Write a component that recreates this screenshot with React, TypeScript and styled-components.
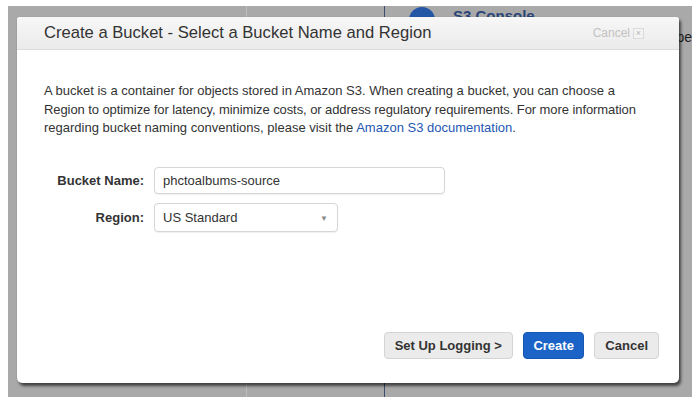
import React from "react";
import styled, { createGlobalStyle } from "styled-components";

const Global = createGlobalStyle`
  html, body { margin: 0; padding: 0; background: #ffffff; }
  body { font-family: "Liberation Sans", Arial, Helvetica, sans-serif; }
  * { box-sizing: border-box; }
`;

const Screen = styled.div`
  width: 698px;
  height: 404px;
  padding: 6px 6px 7px 8px;
  background: #ffffff;
`;

const Backdrop = styled.div`
  position: relative;
  width: 684px;
  height: 391px;
  background: #a9a9a9;
  overflow: hidden;
`;

const PageBehind = styled.div`
  display: flex;
  height: 100%;
`;

const Pane = styled.div<{ $w?: number; $line?: string }>`
  flex: ${(p) => (p.$w ? `0 0 ${p.$w}px` : "1 1 auto")};
  border-right: ${(p) => (p.$line ? `1px solid ${p.$line}` : "none")};
  display: flex;
  flex-direction: column;
`;

const ConsoleHead = styled.div`
  display: flex;
  align-items: flex-start;
  gap: 8px;
  padding: 1px 0 0 24px;
`;

const ConsoleDot = styled.div`
  width: 26px;
  height: 26px;
  border-radius: 50%;
  background: #2456a6;
`;

const ConsoleTitle = styled.div`
  font-size: 15px;
  font-weight: bold;
  color: #2a4577;
  padding-left: 10px;
  line-height: 18px;
`;

const PeekText = styled.div`
  align-self: flex-end;
  margin-top: -4px;
  margin-right: -7px;
  font-size: 14px;
  color: #1e1e1e;
`;

const Dialog = styled.div`
  position: absolute;
  left: 9px;
  top: 11px;
  width: 662px;
  height: 366px;
  background: #ffffff;
  border-radius: 3px 3px 5px 5px;
  box-shadow: 2px 3px 3px rgba(0, 0, 0, 0.6), 0 0 1px rgba(0, 0, 0, 0.3);
  display: flex;
  flex-direction: column;
`;

const Header = styled.div`
  height: 33px;
  display: flex;
  align-items: center;
  justify-content: space-between;
  padding: 0 35px 0 27px;
  background: linear-gradient(#f7f7f7, #ebebeb);
  border-bottom: 1px solid #dcdcdc;
  border-radius: 3px 3px 0 0;
`;

const Title = styled.div`
  font-size: 16.6px;
  color: #333333;
`;

const CloseLink = styled.div`
  display: flex;
  align-items: center;
  gap: 3px;
  font-size: 12px;
  color: #c2c2c2;
`;

const CloseBox = styled.span`
  width: 11px;
  height: 11px;
  border: 1px solid #dadada;
  background: #f3f3f3;
  color: #b8b8b8;
  font-size: 9px;
  line-height: 9px;
  display: inline-flex;
  align-items: center;
  justify-content: center;
`;

const Body = styled.div`
  flex: 1;
  display: flex;
  flex-direction: column;
  padding: 32px 20px 24px 27px;
`;

const Intro = styled.p`
  margin: 0;
  font-size: 13px;
  line-height: 18.5px;
  color: #333333;
`;

const IntroLine = styled.span<{ $track?: number }>`
  display: block;
  white-space: nowrap;
  letter-spacing: ${(p) => p.$track ?? 0}px;
`;

const Link = styled.a`
  color: #2457b3;
  text-decoration: none;
`;

const Form = styled.div`
  display: grid;
  grid-template-columns: 100px auto;
  column-gap: 10px;
  row-gap: 9px;
  margin-top: 29px;
  align-items: center;
  justify-items: start;
`;

const Label = styled.label`
  justify-self: end;
  font-size: 13px;
  font-weight: bold;
  color: #333333;
`;

const Field = styled.div<{ $w: number; $h: number }>`
  width: ${(p) => p.$w}px;
  height: ${(p) => p.$h}px;
  border: 1px solid #d6d6d6;
  border-radius: 4px;
  box-shadow: 0 1px 1px rgba(0, 0, 0, 0.06);
  background: #ffffff;
  display: flex;
  align-items: center;
  justify-content: space-between;
  padding: 0 9px 0 8px;
  font-size: 13px;
  color: #333333;
`;

const Caret = styled.span`
  font-size: 8px;
  color: #8a8a8a;
  margin-top: 3px;
`;

const Footer = styled.div`
  margin-top: auto;
  display: flex;
  justify-content: flex-end;
  gap: 10px;
`;

const Button = styled.button<{ $primary?: boolean }>`
  height: 27px;
  padding: 0 ${(p) => (p.$primary ? 9.5 : 10)}px;
  border-radius: 4px;
  font-family: inherit;
  font-size: 13px;
  font-weight: bold;
  border: 1px solid ${(p) => (p.$primary ? "#1657b4" : "#d4d4d4")};
  background: ${(p) => (p.$primary ? "#1b63c6" : "#ebebeb")};
  color: ${(p) => (p.$primary ? "#ffffff" : "#333333")};
`;

export default function App() {
  return (
    <>
      <Global />
      <Screen>
        <Backdrop>
          <PageBehind>
            <Pane $w={239} $line="#bdbdbd" />
            <Pane $w={138} $line="#3c4d70" />
            <Pane>
              <ConsoleHead>
                <ConsoleDot />
                <ConsoleTitle>S3 Console</ConsoleTitle>
              </ConsoleHead>
              <PeekText>Spec</PeekText>
            </Pane>
          </PageBehind>
          <Dialog>
            <Header>
              <Title>Create a Bucket - Select a Bucket Name and Region</Title>
              <CloseLink>
                Cancel <CloseBox>×</CloseBox>
              </CloseLink>
            </Header>
            <Body>
              <Intro>
                <IntroLine>
                  A bucket is a container for objects stored in Amazon S3. When creating a bucket, you can choose a
                </IntroLine>
                <IntroLine $track={-0.08}>
                  Region to optimize for latency, minimize costs, or address regulatory requirements. For more information
                </IntroLine>
                <IntroLine>
                  regarding bucket naming conventions, please visit the <Link>Amazon S3 documentation</Link>.
                </IntroLine>
              </Intro>
              <Form>
                <Label>Bucket Name:</Label>
                <Field $w={291} $h={27}>phctoalbums-source</Field>
                <Label>Region:</Label>
                <Field $w={184} $h={29}>
                  US Standard <Caret>▼</Caret>
                </Field>
              </Form>
              <Footer>
                <Button>Set Up Logging &gt;</Button>
                <Button $primary>Create</Button>
                <Button>Cancel</Button>
              </Footer>
            </Body>
          </Dialog>
        </Backdrop>
      </Screen>
    </>
  );
}
